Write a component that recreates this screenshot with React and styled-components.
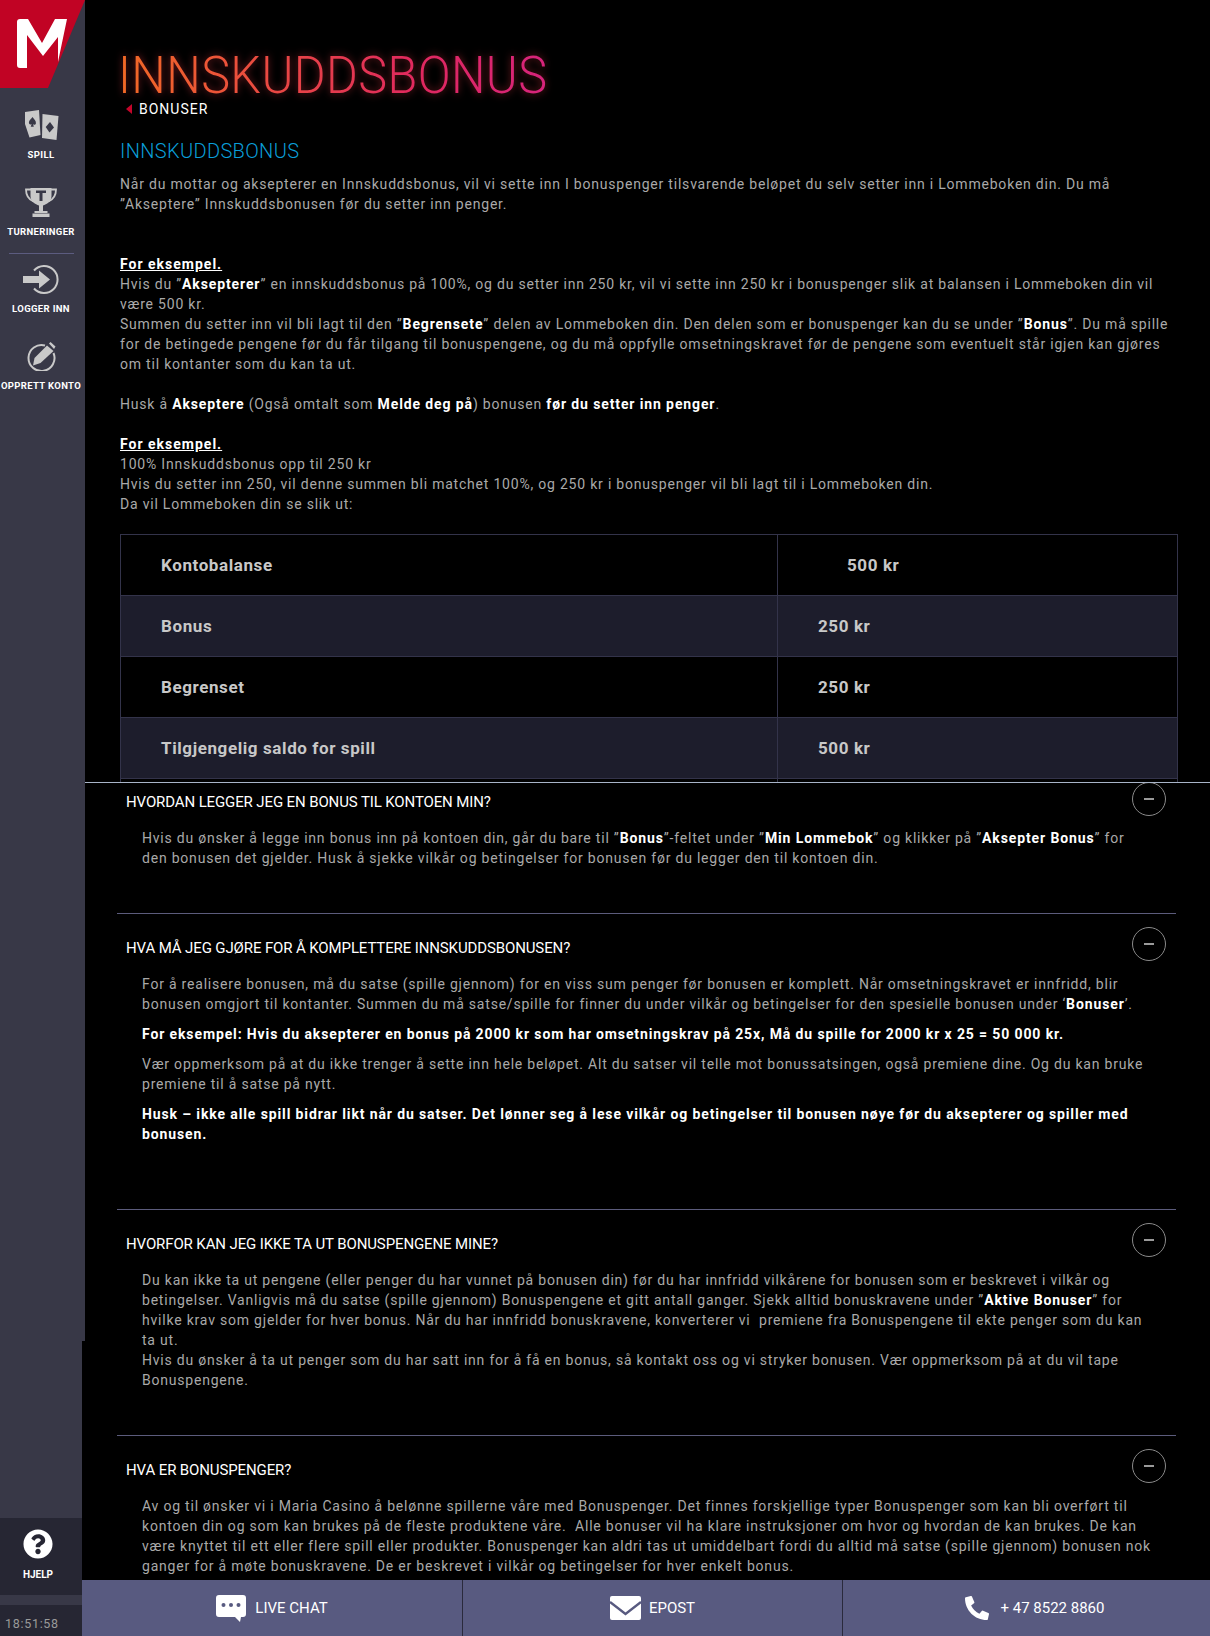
import React from 'react';
import styled, { createGlobalStyle } from 'styled-components';
import { FaPhoneAlt, FaQuestionCircle } from 'react-icons/fa';

const GlobalStyle = createGlobalStyle`
  html, body {
    margin: 0;
    padding: 0;
    background: #000;
    height: 1636px;
    overflow: hidden;
  }
  * {
    box-sizing: border-box;
  }
`;

const Page = styled.div`
  display: flex;
  width: 1210px;
  height: 1636px;
  overflow: hidden;
  background: #000;
  font-family: Roboto, "Liberation Sans", sans-serif;
  color: #a9a9a9;
  font-size: 14px;
  line-height: 20px;
  letter-spacing: 0.79px;
`;

const Sidebar = styled.aside`
  flex: 0 0 85px;
  display: flex;
  flex-direction: column;
  height: 1636px;
  position: relative;
  z-index: 3;
`;

const SideTop = styled.div`
  height: 1341px;
  background: #383847;
`;

const SideBottom = styled.div`
  flex: 1;
  width: 82px;
  display: flex;
  flex-direction: column;
  background: #383847;
`;

const Logo = styled.svg`
  display: block;
  width: 85px;
  height: 88px;
`;

const NavItem = styled.div`
  display: flex;
  flex-direction: column;
  align-items: center;
  height: ${(p) => p.$h}px;
  padding: ${(p) => p.$top}px 3px 0 0;
  color: #fff;
  font-size: 9.5px;
  line-height: 12px;
  font-weight: 700;
  letter-spacing: 0.35px;
  white-space: nowrap;
  svg {
    display: block;
    margin-bottom: 9px;
  }
`;

const NavRule = styled.div`
  width: 65px;
  height: 1px;
  margin-left: 9px;
  background: #5c5c80;
`;

const SideSpacer = styled.div`
  flex: 1;
`;

const HelpBox = styled.div`
  height: 77px;
  background: #262633;
  display: flex;
  flex-direction: column;
  align-items: center;
  padding: 11px 6px 0 0;
  color: #fff;
  font-size: 10px;
  font-weight: 700;
  line-height: 12px;
  letter-spacing: 0;
  svg {
    display: block;
    margin-bottom: 10px;
  }
`;

const SideGap = styled.div`
  height: 10px;
`;

const Clock = styled.div`
  height: 31px;
  background: #262633;
  color: #9a9a9a;
  font-size: 12.5px;
  line-height: 37px;
  padding-left: 5px;
  letter-spacing: 0.7px;
`;

const Main = styled.main`
  flex: 1;
  display: flex;
  flex-direction: column;
  min-width: 0;
  position: relative;
`;

const TopPane = styled.div`
  flex: 0 0 782px;
  padding: 44px 32px 0 35px;
  overflow: hidden;
`;

const PageTitle = styled.h1`
  margin: 0 0 0 -2px;
  font-size: 52px;
  line-height: 64px;
  font-weight: 300;
  letter-spacing: 0.4px;
  width: max-content;
  transform: scaleX(0.935);
  transform-origin: left center;
  background: linear-gradient(90deg, #f26a25, #e0285f 70%, #d6247c);
  -webkit-background-clip: text;
  background-clip: text;
  color: transparent;
  filter: drop-shadow(0 0 4px rgba(214, 50, 60, 0.6));
`;

const Back = styled.div`
  display: flex;
  align-items: center;
  gap: 7px;
  margin: -9px 0 0 6px;
  height: 20px;
  color: #fff;
  font-size: 14px;
  letter-spacing: 1px;
  &::before {
    content: '';
    border-style: solid;
    border-width: 5px 6px 5px 0;
    border-color: transparent #c4052a transparent transparent;
  }
`;

const SectionTitle = styled.h2`
  margin: 19px 0 10px;
  font-size: 20px;
  line-height: 26px;
  font-weight: 300;
  color: #0a9ed8;
  letter-spacing: 0.35px;
`;

const Para = styled.p`
  margin: 0 0 ${(p) => p.$after ?? 0}px;
`;

const ExampleHead = styled.div`
  color: #fff;
  font-weight: 700;
  text-decoration: underline;
  letter-spacing: 1px;
`;

const Strong = styled.b`
  color: #fff;
  font-weight: 700;
  letter-spacing: 0.88px;
`;

const BonusTable = styled.table`
  width: 1058px;
  margin-top: 20px;
  border-collapse: collapse;
  table-layout: fixed;
  color: #c8c8c8;
  font-size: 17px;
  font-weight: 700;
  letter-spacing: 0.6px;
`;

const Row = styled.tr`
  height: 61px;
  background: ${(p) => (p.$alt ? '#1d1d2c' : '#000')};
`;

const Cell = styled.td`
  border: 1px solid #33334a;
  padding: 0 0 0 ${(p) => p.$pad}px;
  width: ${(p) => p.$w || 'auto'};
`;

const Faq = styled.div`
  flex: 1;
  border-top: 1px solid #a8b4c8;
  padding: 0 34px 0 32px;
  background: #000;
  overflow: hidden;
`;

const FaqItem = styled.section`
  height: ${(p) => p.$h}px;
  border-top: ${(p) => (p.$first ? 'none' : '1px solid #5c5c7c')};
  padding-top: ${(p) => (p.$first ? 0 : 15)}px;
`;

const FaqHead = styled.div`
  display: flex;
  align-items: flex-start;
  justify-content: space-between;
  padding: 0 10px 0 9px;
  height: 37px;
  margin-bottom: 8px;
`;

const FaqTitle = styled.h3`
  margin: 9px 0 0;
  font-size: 15px;
  line-height: 20px;
  font-weight: 400;
  color: #fff;
  letter-spacing: -0.12px;
`;

const Toggle = styled.div`
  flex: 0 0 34px;
  width: 34px;
  height: 34px;
  margin: ${(p) => (p.$first ? -1 : -2)}px 0 0;
  border: 1px solid #8a8a8a;
  border-radius: 50%;
  display: flex;
  align-items: center;
  justify-content: center;
  &::before {
    content: '';
    width: 10px;
    height: 2px;
    background: #9a9a9a;
  }
`;

const FaqBody = styled.div`
  padding: 0 25px;
`;

const Footer = styled.footer`
  position: absolute;
  left: -3px;
  right: 0;
  bottom: 0;
  height: 56px;
  display: grid;
  grid-template-columns: 380px 380px 1fr;
  background: #585a80;
  z-index: 4;
`;

const FooterItem = styled.div`
  display: flex;
  align-items: center;
  justify-content: center;
  gap: ${(p) => p.$gap || 9}px;
  padding-left: ${(p) => p.$shift || 0}px;
  color: #fff;
  font-size: 15px;
  letter-spacing: 0;
  border-left: ${(p) => (p.$first ? 'none' : '1px solid #2a2a3c')};
`;

const Cards = () => (
  <svg width="35" height="30" viewBox="0 0 35 30" fill="#c9c9c9">
    <path d="M1 2 15 0l1.500 25-11 2.500L1 14z" />
    <path d="M18.500 4l16 2-2 24-14.500-2z" />
    <path d="M8.500 7c1.800 2.800 3.800 4 3.400 6.400-.4 1.800-2.400 1.500-2.800.5l.7 2.800H6.700l1-2.800c-1 1-2.800.8-2.800-1.300C4.900 10.500 7 9 8.500 7z" fill="#383847" />
    <path d="M26 12l4 5.500-4.500 5-3.800-5.500z" fill="#383847" />
  </svg>
);

const Trophy = () => (
  <svg width="32" height="30" viewBox="0 0 32 30" fill="#c9c9c9">
    <path d="M5.500 1h21v8c0 5.500-5 8.500-8.500 9.500V24h4.500v2h-13v-2H14v-5.500C10.500 17.500 5.500 14.500 5.500 9z" />
    <rect x="7.500" y="26.500" width="17" height="3.500" />
    <path d="M6 2.500H1c0 5.500 3 10 7.500 12M26 2.500h5c0 5.500-3 10-7.500 12" fill="none" stroke="#c9c9c9" strokeWidth="1.800" />
    <path d="M11 3.500h10v2.500h-3.500v8h-3V6H11z" fill="#383847" />
  </svg>
);

const LoginIcon = () => (
  <svg width="36" height="29" viewBox="0 0 36 29" fill="none">
    <path d="M11 5.500a13.500 13.500 0 1 1 0 18" stroke="#c9c9c9" strokeWidth="2" />
    <path d="M0 11h16V5.500l11 9-11 9V18H0z" fill="#c9c9c9" />
  </svg>
);

const SignupIcon = () => (
  <svg width="30" height="29" viewBox="0 0 30 29" fill="none">
    <path d="M19 3.500A13 13 0 1 0 27.500 11" stroke="#c9c9c9" strokeWidth="2" />
    <path d="M21 3.500l6.500 5.500L14.500 21 7 23.500l1.500-7.500z" fill="#c9c9c9" />
    <path d="M23 1.500l1.500-1.500 5 4.500-1.500 2.500z" fill="#c9c9c9" />
  </svg>
);

const ChatIcon = () => (
  <svg width="30" height="27" viewBox="0 0 30 27">
    <path d="M3 0h24a3 3 0 0 1 3 3v16a3 3 0 0 1-3 3h-2l-1 5-5-5H3a3 3 0 0 1-3-3V3a3 3 0 0 1 3-3z" fill="#fff" />
    <circle cx="7.500" cy="10" r="2" fill="#585a80" />
    <circle cx="15" cy="10" r="2" fill="#585a80" />
    <circle cx="22.500" cy="10" r="2" fill="#585a80" />
  </svg>
);

const MailIcon = () => (
  <svg width="31" height="24" viewBox="0 0 31 24">
    <rect width="31" height="24" rx="2" fill="#fff" />
    <path d="M0 6l15.500 12L31 6" fill="none" stroke="#585a80" strokeWidth="2.400" />
  </svg>
);

export default function App() {
  return (
    <Page>
      <GlobalStyle />
      <Sidebar>
        <SideTop>
          <Logo viewBox="0 0 85 88">
            <path d="M0 0h85L48 88H0z" fill="#c10324" />
            <path d="M17 22q0-3 3-3h8l14 24 13-24h12l-9 43V37L43 56 27 35v33h-7q-3 0-3-3z" fill="#fff" />
          </Logo>
          <NavItem $h={77} $top={22}><Cards />SPILL</NavItem>
          <NavItem $h={88} $top={22}><Trophy />TURNERINGER</NavItem>
          <NavRule />
          <NavItem $h={77} $top={11}><LoginIcon />LOGGER INN</NavItem>
          <NavItem $h={77} $top={11}><SignupIcon />OPPRETT KONTO</NavItem>
        </SideTop>
        <SideBottom>
          <SideSpacer />
          <HelpBox><FaQuestionCircle size={30} color="#fff" />HJELP</HelpBox>
          <SideGap />
          <Clock>18:51:58</Clock>
        </SideBottom>
      </Sidebar>
      <Main>
        <TopPane>
          <PageTitle>INNSKUDDSBONUS</PageTitle>
          <Back>BONUSER</Back>
          <SectionTitle>INNSKUDDSBONUS</SectionTitle>
          <Para $after={40}>Når du mottar og aksepterer en Innskuddsbonus, vil vi sette inn I bonuspenger tilsvarende beløpet du selv setter inn i Lommeboken din. Du må ”Akseptere” Innskuddsbonusen før du setter inn penger.</Para>
          <ExampleHead>For eksempel.</ExampleHead>
          <Para>Hvis du ”<Strong>Aksepterer</Strong>” en innskuddsbonus på 100%, og du setter inn 250 kr, vil vi sette inn 250 kr i bonuspenger slik at balansen i Lommeboken din vil være 500 kr.</Para>
          <Para $after={20}>Summen du setter inn vil bli lagt til den ”<Strong>Begrensete</Strong>” delen av Lommeboken din. Den delen som er bonuspenger kan du se under ”<Strong>Bonus</Strong>”. Du må spille for de betingede pengene før du får tilgang til bonuspengene, og du må oppfylle omsetningskravet før de pengene som eventuelt står igjen kan gjøres om til kontanter som du kan ta ut.</Para>
          <Para $after={20}>Husk å <Strong>Akseptere</Strong> (Også omtalt som <Strong>Melde deg på</Strong>) bonusen <Strong>før du setter inn penger</Strong>.</Para>
          <ExampleHead>For eksempel.</ExampleHead>
          <Para>100% Innskuddsbonus opp til 250 kr</Para>
          <Para>Hvis du setter inn 250, vil denne summen bli matchet 100%, og 250 kr i bonuspenger vil bli lagt til i Lommeboken din.</Para>
          <Para>Da vil Lommeboken din se slik ut:</Para>
          <BonusTable>
            <tbody>
              <Row><Cell $pad={40} $w="657px">Kontobalanse</Cell><Cell $pad={69}>500 kr</Cell></Row>
              <Row $alt><Cell $pad={40}>Bonus</Cell><Cell $pad={40}>250 kr</Cell></Row>
              <Row><Cell $pad={40}>Begrenset</Cell><Cell $pad={40}>250 kr</Cell></Row>
              <Row $alt><Cell $pad={40}>Tilgjengelig saldo for spill</Cell><Cell $pad={40}>500 kr</Cell></Row>
              <Row><Cell /><Cell /></Row>
            </tbody>
          </BonusTable>
        </TopPane>
        <Faq>
          <FaqItem $first $h={130}>
            <FaqHead><FaqTitle>HVORDAN LEGGER JEG EN BONUS TIL KONTOEN MIN?</FaqTitle><Toggle $first /></FaqHead>
            <FaqBody>
              <Para>Hvis du ønsker å legge inn bonus inn på kontoen din, går du bare til ”<Strong>Bonus</Strong>”-feltet under ”<Strong>Min Lommebok</Strong>” og klikker på ”<Strong>Aksepter Bonus</Strong>” for den bonusen det gjelder. Husk å sjekke vilkår og betingelser for bonusen før du legger den til kontoen din.</Para>
            </FaqBody>
          </FaqItem>
          <FaqItem $h={296}>
            <FaqHead><FaqTitle>HVA MÅ JEG GJØRE FOR Å KOMPLETTERE INNSKUDDSBONUSEN?</FaqTitle><Toggle /></FaqHead>
            <FaqBody>
              <Para $after={10}>For å realisere bonusen, må du satse (spille gjennom) for en viss sum penger før bonusen er komplett. Når omsetningskravet er innfridd, blir bonusen omgjort til kontanter. Summen du må satse/spille for finner du under vilkår og betingelser for den spesielle bonusen under ‘<Strong>Bonuser</Strong>’.</Para>
              <Para $after={10}><Strong>For eksempel: Hvis du aksepterer en bonus på 2000 kr som har omsetningskrav på 25x, Må du spille for 2000 kr x 25 = 50 000 kr.</Strong></Para>
              <Para $after={10}>Vær oppmerksom på at du ikke trenger å sette inn hele beløpet. Alt du satser vil telle mot bonussatsingen, også premiene dine. Og du kan bruke premiene til å satse på nytt.</Para>
              <Para><Strong>Husk – ikke alle spill bidrar likt når du satser. Det lønner seg å lese vilkår og betingelser til bonusen nøye før du aksepterer og spiller med bonusen.</Strong></Para>
            </FaqBody>
          </FaqItem>
          <FaqItem $h={226}>
            <FaqHead><FaqTitle>HVORFOR KAN JEG IKKE TA UT BONUSPENGENE MINE?</FaqTitle><Toggle /></FaqHead>
            <FaqBody>
              <Para>Du kan ikke ta ut pengene (eller penger du har vunnet på bonusen din) før du har innfridd vilkårene for bonusen som er beskrevet i vilkår og betingelser. Vanligvis må du satse (spille gjennom) Bonuspengene et gitt antall ganger. Sjekk alltid bonuskravene under ”<Strong>Aktive Bonuser</Strong>” for hvilke krav som gjelder for hver bonus. Når du har innfridd bonuskravene, konverterer vi&nbsp; premiene fra Bonuspengene til ekte penger som du kan ta ut.</Para>
              <Para>Hvis du ønsker å ta ut penger som du har satt inn for å få en bonus, så kontakt oss og vi stryker bonusen. Vær oppmerksom på at du vil tape Bonuspengene.</Para>
            </FaqBody>
          </FaqItem>
          <FaqItem $h={150}>
            <FaqHead><FaqTitle>HVA ER BONUSPENGER?</FaqTitle><Toggle /></FaqHead>
            <FaqBody>
              <Para>Av og til ønsker vi i Maria Casino å belønne spillerne våre med Bonuspenger. Det finnes forskjellige typer Bonuspenger som kan bli overført til kontoen din og som kan brukes på de fleste produktene våre.&nbsp; Alle bonuser vil ha klare instruksjoner om hvor og hvordan de kan brukes. De kan være knyttet til ett eller flere spill eller produkter. Bonuspenger kan aldri tas ut umiddelbart fordi du alltid må satse (spille gjennom) bonusen nok ganger for å møte bonuskravene. De er beskrevet i vilkår og betingelser for hver enkelt bonus.</Para>
            </FaqBody>
          </FaqItem>
        </Faq>
        <Footer>
          <FooterItem $first><ChatIcon />LIVE CHAT</FooterItem>
          <FooterItem $gap={8}><MailIcon />EPOST</FooterItem>
          <FooterItem $gap={12} $shift={16}><FaPhoneAlt size={24} />+ 47 8522 8860</FooterItem>
        </Footer>
      </Main>
    </Page>
  );
}
